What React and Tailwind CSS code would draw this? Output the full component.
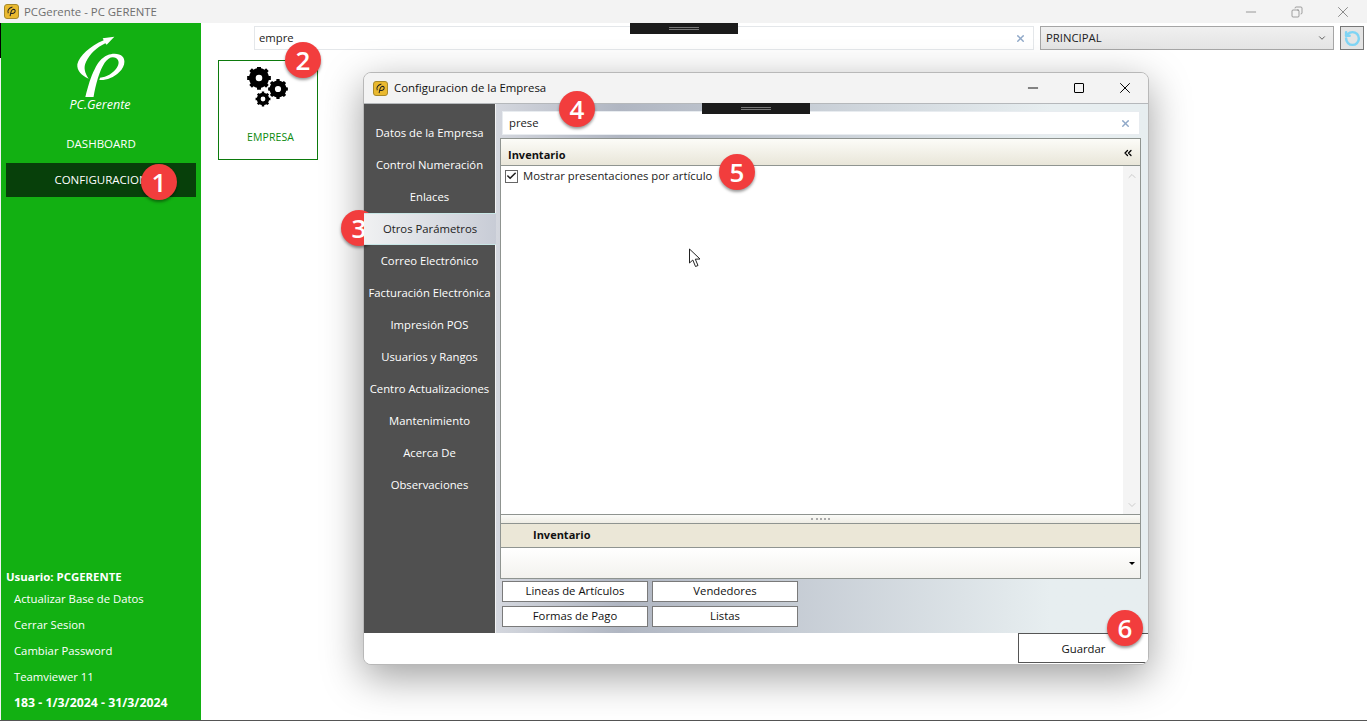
import React from "react";
import { ChevronDown, X, Minus, Copy, RotateCw, ChevronsLeft, ChevronUp, Check } from "lucide-react";

const font = "font-['Open_Sans','Noto_Sans',sans-serif]";

const NAV_ITEMS = [
  "Datos de la Empresa",
  "Control Numeración",
  "Enlaces",
  "Otros Parámetros",
  "Correo Electrónico",
  "Facturación Electrónica",
  "Impresión POS",
  "Usuarios y Rangos",
  "Centro Actualizaciones",
  "Mantenimiento",
  "Acerca De",
  "Observaciones",
];

// square toothed gear, computed from the tooth count
function gearPath(cx, cy, outer, root, hole, teeth) {
  let d = "";
  const step = (Math.PI * 2) / teeth;
  for (let i = 0; i < teeth; i++) {
    const a = i * step;
    const pts = [
      [root, a - step * 0.5],
      [root, a - step * 0.26],
      [outer, a - step * 0.2],
      [outer, a + step * 0.2],
      [root, a + step * 0.26],
    ];
    pts.forEach(([r, t], j) => {
      const x = (cx + r * Math.cos(t)).toFixed(2);
      const y = (cy + r * Math.sin(t)).toFixed(2);
      d += `${i === 0 && j === 0 ? "M" : "L"}${x} ${y} `;
    });
  }
  d += `Z M${cx + hole} ${cy} A${hole} ${hole} 0 1 0 ${cx - hole} ${cy} A${hole} ${hole} 0 1 0 ${cx + hole} ${cy} Z`;
  return d;
}

function Gears() {
  return (
    <svg width="44" height="44" viewBox="0 0 44 44" className="block">
      <path fillRule="evenodd" d={gearPath(13, 11, 12, 10, 3.3, 8)} fill="#000" />
      <path fillRule="evenodd" d={gearPath(32, 22, 10, 8.4, 3.1, 8)} fill="#000" />
      <path fillRule="evenodd" d={gearPath(17, 32, 7.5, 6.2, 2.4, 8)} fill="#000" />
    </svg>
  );
}

function Logo() {
  return (
    <svg width="80" height="67" viewBox="0 0 240 201" className="block mr-[2px]">
      <path d="M163 20 L128 25 L131 31 C90 48 58 78 52 103 C50 122 65 138 86 146 C74 128 70 112 78 96 C88 74 110 52 136 40 L140 44 Z" fill="#fff" />
      <path d="M75 205 C84 170 92 140 104 118 C114 98 124 84 142 76 C158 69 178 70 188 80 C198 92 193 112 178 126 C160 144 136 152 118 150 L120 143 C140 142 158 130 170 114 C178 102 178 90 168 84 C156 78 144 84 134 98 C118 122 106 166 100 205 Z" fill="#fff" />
    </svg>
  );
}

function AppIcon() {
  return (
    <div className="w-[15px] h-[15px] rounded-[3px] bg-[#eab92f] border border-[#a88a2a] flex items-center justify-center">
      <svg width="11" height="11" viewBox="0 0 12 12" fill="none" stroke="#222" strokeWidth="1.1">
        <path d="M7 1 C3 2 1 5 2.500 8 M4.500 11 C5 7 5.500 4 8 3.500 C10 3.500 10.500 5.500 9.500 7 C8.500 8 7 8.500 5.500 8" />
      </svg>
    </div>
  );
}

function Badge({ n, className }) {
  return (
    <div className={`absolute w-9 h-9 rounded-full bg-[#f23d3d] text-white text-[26px] font-semibold leading-none flex items-center justify-center shadow-[0_2px_3px_rgba(0,0,0,0.4)] font-['Open_Sans',sans-serif] ${className}`}>
      {n}
    </div>
  );
}

function Grip({ className }) {
  return (
    <div className={`absolute w-[108px] h-[11px] bg-[#1b1b1b] flex flex-col items-center justify-center gap-px ${className}`}>
      <div className="w-[30px] h-px bg-[#777]" />
      <div className="w-[30px] h-px bg-[#777]" />
    </div>
  );
}

function SearchX({ className }) {
  return <X size={11} strokeWidth={3} className={`text-[#8fa8c8] ${className}`} />;
}

function SmallButton({ children }) {
  return (
    <button className="w-[146px] h-[21px] border border-[#7a7a7a] bg-white text-[11.3px] text-[#111] flex items-center justify-center">
      {children}
    </button>
  );
}

function SideLink({ children, bold }) {
  return (
    <div className={`h-[26px] pl-[13px] flex items-center text-white ${bold ? "font-bold text-[12.3px]" : "text-[11.3px]"}`}>
      {children}
    </div>
  );
}

function ConfigDialog() {
  return (
    <div className="absolute left-[363px] top-[72px] w-[786px] h-[593px] rounded-lg border border-[#b8b8b8] bg-[#f2f2f2] shadow-[0_12px_40px_rgba(0,0,0,0.38)] flex flex-col overflow-hidden">
      <div className="h-[30px] shrink-0 flex items-center pl-[9px] bg-[#f3f3f3]">
        <AppIcon />
        <span className="ml-[6px] text-[11.4px] text-[#111]">Configuracion de la Empresa</span>
        <div className="ml-auto flex items-center">
          <div className="w-[46px] flex justify-center"><Minus size={16} strokeWidth={1.4} /></div>
          <div className="w-[46px] flex justify-center"><div className="w-[10px] h-[10px] border border-black rounded-[1px]" /></div>
          <div className="w-[46px] flex justify-center"><X size={18} strokeWidth={1.3} /></div>
        </div>
      </div>

      <div className="flex-1 flex min-h-0 border-t border-[#b5b8bb]">
        <nav className="w-[131px] shrink-0 bg-[#505050] pt-[13px] flex flex-col">
          {NAV_ITEMS.map((item) => (
            <div
              key={item}
              className={
                item === "Otros Parámetros"
                  ? "h-[32px] w-[132px] relative z-10 flex items-center justify-center text-[11.3px] text-[#222] bg-gradient-to-r from-[#f0f1f2] to-[#c8ccd6] border-y border-[#c8e6e6]"
                  : "h-[32px] flex items-center justify-center text-[11.3px] text-white whitespace-nowrap"
              }
            >
              {item}
            </div>
          ))}
        </nav>

        <div className="flex-1 min-w-0 flex flex-col bg-gradient-to-r from-[#d4d7de] via-[#b0b6c2] via-[19%] to-[#e7eef0] to-[85%] pl-[5px] pr-[7px] pt-[7px] ml-px">
          <div className="h-[24px] mx-[1px] shrink-0 bg-white border border-[#e8ecf0] flex items-center px-[6px]">
            <span className="text-[11.3px] text-[#222]">prese</span>
            <SearchX className="ml-auto mr-[2px]" />
          </div>

          <div className="mt-[3px] shrink-0 -ml-[1px] border border-[#8f9490] flex flex-col">
            <div className="h-[27px] shrink-0 bg-gradient-to-b from-[#fcfcf8] to-[#e9e6d9] border-b border-[#8f9490] flex items-end pb-[2px] pl-[7px] pr-[6px]">
              <span className="text-[11px] font-bold text-[#111]">Inventario</span>
              <ChevronsLeft size={12} strokeWidth={2.5} className="ml-auto mb-[4px]" />
            </div>
            <div className="h-[349px] shrink-0 bg-white flex">
              <div className="flex-1 pl-[4px] pt-[2px]">
                <div className="flex items-center h-[16px]">
                  <div className="w-[13px] h-[13px] border border-[#666] flex items-center justify-center">
                    <Check size={12} strokeWidth={3.5} className="text-[#222]" />
                  </div>
                  <span className="ml-[5px] text-[11.3px] text-[#222]">Mostrar presentaciones por artículo</span>
                </div>
              </div>
              <div className="w-[17px] bg-[#f4f4f4] flex flex-col items-center justify-between py-[4px]">
                <ChevronUp size={12} className="text-[#ccc]" />
                <ChevronDown size={12} className="text-[#ccc]" />
              </div>
            </div>
            <div className="h-[8px] shrink-0 bg-gradient-to-b from-[#fbfbf8] to-[#efede4] border-y border-[#8f9490] box-content -my-px flex items-center justify-center">
              <div className="w-[19px] h-[2px] border-t-2 border-dotted border-[#aaa]" />
            </div>
            <div className="h-[24px] shrink-0 bg-[#ebe7d7] border-b border-[#8f9490] flex items-center pl-[32px] mt-px">
              <span className="text-[11px] font-bold text-[#111]">Inventario</span>
            </div>
            <div className="h-[30px] shrink-0 bg-gradient-to-b from-white to-[#f3f2ee] flex items-center justify-end pr-[5px]">
              <div className="w-0 h-0 border-x-[3px] border-x-transparent border-t-[3px] border-t-black" />
            </div>
          </div>

          <div className="shrink-0 pl-[1px] pt-[2px] flex flex-col gap-[4px]">
            <div className="flex gap-[4px]">
              <SmallButton>Lineas de Artículos</SmallButton>
              <SmallButton>Vendedores</SmallButton>
            </div>
            <div className="flex gap-[4px]">
              <SmallButton>Formas de Pago</SmallButton>
              <SmallButton>Listas</SmallButton>
            </div>
          </div>
        </div>
      </div>

      <div className="h-[31px] shrink-0 bg-white flex justify-end">
        <button className="w-[130px] h-[30px] pt-[3px] border border-[#555] border-r-0 bg-white text-[11.3px] text-[#111] flex items-center justify-center">
          Guardar
        </button>
      </div>
      <Grip className="left-[338px] top-[30px]" />
    </div>
  );
}

export default function App() {
  return (
    <div className={`relative w-[1367px] h-[721px] overflow-hidden bg-white flex flex-col ${font}`}>
      <div className="h-[23px] shrink-0 bg-[#f3f3f3] flex items-center pl-[4px]">
        <AppIcon />
        <span className="ml-[5px] text-[11.4px] text-[#6f6f6f]">PCGerente - PC GERENTE</span>
        <div className="ml-auto pr-px flex items-center text-[#6a6a6a]">
          <div className="w-[46px] flex justify-center"><Minus size={16} strokeWidth={1} /></div>
          <div className="w-[46px] flex justify-center"><Copy size={12} strokeWidth={1.2} className="-scale-x-100" /></div>
          <div className="w-[46px] flex justify-center"><X size={18} strokeWidth={1} /></div>
        </div>
      </div>

      <div className="flex-1 min-h-0 flex border-b border-[#555]">
        <aside className="w-[201px] shrink-0 bg-[#12b012] border-l border-[#f3f3f3] flex flex-col">
          <div className="pt-[7px] flex flex-col items-center">
            <Logo />
            <span className="italic text-[12.5px] text-white leading-none mt-[2px] mr-[2px]">PC.Gerente</span>
          </div>
          <div className="mt-[15px] h-[34px] flex items-center justify-center text-[11.5px] text-white">DASHBOARD</div>
          <div className="mt-[2px] mx-[5px] h-[34px] bg-[#07400a] flex items-center justify-center text-[11.5px] text-white">CONFIGURACION</div>
          <div className="mt-auto pb-[4px]">
            <div className="pl-[5px] h-[18px] flex items-center text-[11.4px] font-bold text-white">Usuario: PCGERENTE</div>
            <SideLink>Actualizar Base de Datos</SideLink>
            <SideLink>Cerrar Sesion</SideLink>
            <SideLink>Cambiar Password</SideLink>
            <SideLink>Teamviewer 11</SideLink>
            <SideLink bold>183 - 1/3/2024 - 31/3/2024</SideLink>
          </div>
        </aside>

        <main className="flex-1 min-w-0">
          <div className="pt-[3px] pl-[53px] pr-[3px] flex">
            <div className="w-[780px] h-[24px] border border-[#e4e7ea] bg-white flex items-center px-[4px]">
              <span className="text-[11.3px] text-[#222]">empre</span>
              <SearchX className="ml-auto mr-[3px]" />
            </div>
            <div className="ml-[6px] w-[294px] h-[24px] border border-[#a5a5a5] bg-gradient-to-b from-[#f0f0f0] to-[#e4e4e4] flex items-center px-[5px]">
              <span className="text-[11.3px] text-[#222]">PRINCIPAL</span>
              <ChevronDown size={10} className="ml-auto mr-[1px] text-[#444]" />
            </div>
            <div className="ml-[6px] w-[24px] h-[24px] border border-[#777] bg-[#e4e4e4] flex items-center justify-center">
              <RotateCw size={17} strokeWidth={3.5} className="text-[#7fd4f4] -scale-x-100" />
            </div>
          </div>
          <div className="ml-[17px] mt-[10px] w-[100px] h-[100px] border border-[#0c7a0c] bg-white flex flex-col items-center">
            <div className="mt-[6px] h-[44px]"><Gears /></div>
            <span className="mt-[19px] ml-[5px] text-[10.5px] tracking-[0.1px] text-[#0c8a0c]">EMPRESA</span>
          </div>
        </main>
      </div>

      <div className="absolute left-0 top-[23px] w-px h-[35px] bg-black" />
      <ConfigDialog />
      <Grip className="left-[630px] top-[23px]" />

      {/* mouse pointer */}
      <svg width="14" height="20" viewBox="0 0 14 20" className="absolute left-[688px] top-[248px]">
        <path d="M1.500 1 L1.500 15 L4.800 12 L7.500 18.500 L10 17.500 L7.300 11.200 L12 11 Z" fill="#fff" stroke="#222" strokeWidth="1" />
      </svg>

      <Badge n="1" className="left-[141px] top-[164px]" />
      <Badge n="2" className="left-[285px] top-[42px]" />
      <Badge n="3" className="left-[341px] top-[210px]" />
      <Badge n="4" className="left-[559px] top-[91px]" />
      <Badge n="5" className="left-[719px] top-[154px]" />
      <Badge n="6" className="left-[1107px] top-[610px]" />
    </div>
  );
}
